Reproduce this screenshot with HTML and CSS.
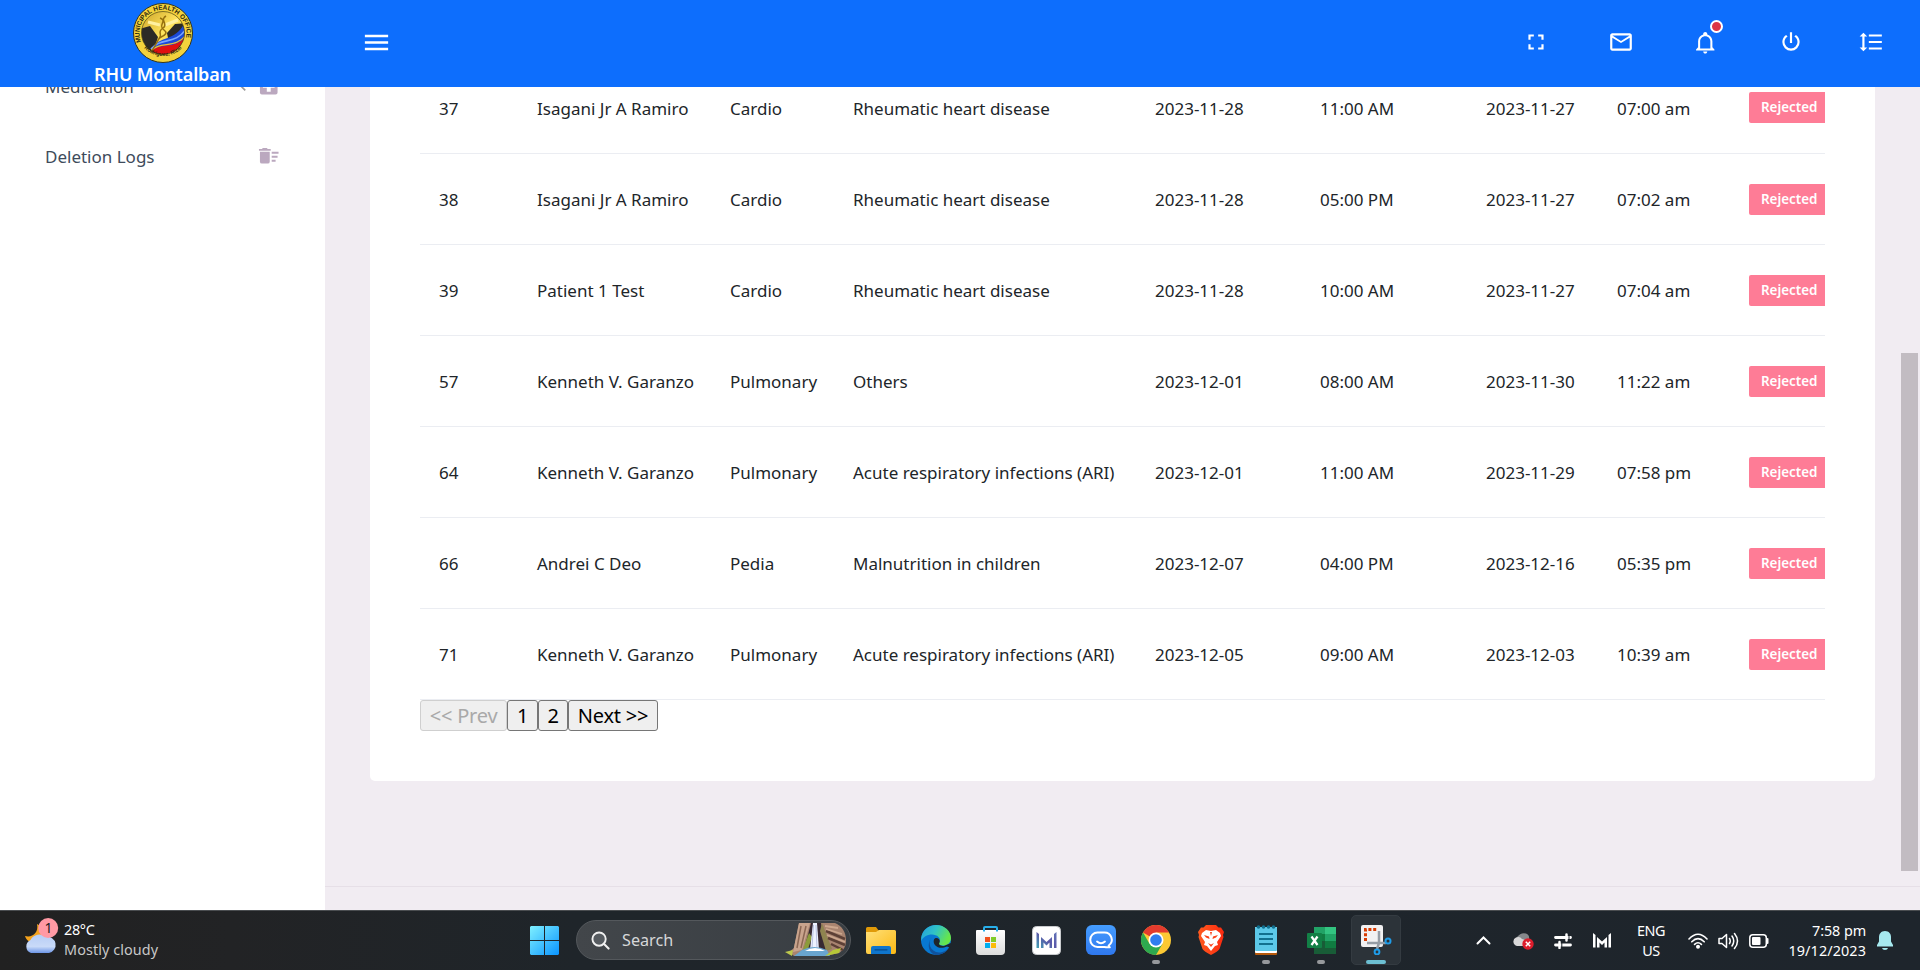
FILE: index.html
```html
<!DOCTYPE html>
<html lang="en">
<head>
<meta charset="utf-8">
<title>RHU Montalban</title>
<link rel="stylesheet" href="styles.css">
</head>
<body>
<header class="navbar">
  <div class="brand">
    <svg class="brand-logo" viewBox="0 0 60 60" width="60" height="60">
      <defs>
        <clipPath id="seal"><circle cx="30" cy="30" r="21.5"/></clipPath>
        <linearGradient id="gold" x1="0" y1="0" x2="1" y2="1"><stop offset="0" stop-color="#b98a12"/><stop offset=".5" stop-color="#ffe45e"/><stop offset="1" stop-color="#d9a51c"/></linearGradient>
        <path id="arcTop" d="M8.2 39 A23.5 23.5 0 1 1 51.8 39"/>
        <path id="arcBottom" d="M8.5 42 A26.5 26.5 0 0 0 51.5 42"/>
      </defs>
      <circle cx="30" cy="30" r="29.5" fill="#f3d23c" stroke="#35351c" stroke-width="1"/>
      <g clip-path="url(#seal)">
        <rect width="60" height="60" fill="url(#gold)"/>
        <path d="M6 26L17 23L25 34L20 50L6 52Z" fill="#2c2a26"/>
        <path d="M34 30L42 21L54 20L54 34L36 40Z" fill="#2c2a26"/>
        <path d="M19 45C27 33 42 38 51 21L55 32L44 48L18 50Z" fill="#1b49d8"/>
        <path d="M18 46C28 34 43 42 53 26" fill="none" stroke="#78a6ff" stroke-width="1.6"/>
        <path d="M17 49C28 38 42 48 54 32L54 60L17 60Z" fill="#e01010"/>
        <path d="M17 48.500C28 37 42 47 54 31" fill="none" stroke="#f0c030" stroke-width="1.2"/>
        <path d="M15 19L27 22M45 17L32 22" stroke="#fff0a0" stroke-width="3"/>
        <path d="M33 13C26 17 36 21 30 25S29 31 27 34L19 48M27 15C35 18 24 22 31 27S24 34 25 38" fill="none" stroke="#96700e" stroke-width="1.5"/>
      </g>
      <circle cx="30" cy="30" r="21.5" fill="none" stroke="#4a4316" stroke-width=".7"/>
      <text class="seal-text"><textPath href="#arcTop" textLength="87" lengthAdjust="spacingAndGlyphs">MUNICIPAL HEALTH OFFICE</textPath></text>
      <text class="seal-text seal-small"><textPath href="#arcBottom" startOffset="4" textLength="42" lengthAdjust="spacingAndGlyphs">Rodriguez, Rizal</textPath></text>
    </svg>
    <span class="brand-name">RHU Montalban</span>
  </div>
  <div class="menu-toggle"><svg viewBox="0 0 24 24" width="31" height="31"><path d="M3,6H21V8H3V6M3,11H21V13H3V11M3,16H21V18H3V16Z"/></svg></div>
  <nav class="nav-icons">
    <div class="nav-item"><svg viewBox="0 0 24 24" width="26" height="26"><path d="M5,5H10V7H7V10H5V5M14,5H19V10H17V7H14V5M17,14H19V19H14V17H17V14M10,17V19H5V14H7V17H10Z"/></svg></div>
    <div class="nav-item"><svg viewBox="0 0 24 24" width="26" height="26"><path d="M22 6C22 4.900 21.100 4 20 4H4C2.900 4 2 4.900 2 6V18C2 19.100 2.900 20 4 20H20C21.100 20 22 19.100 22 18V6M20 6L12 11L4 6H20M20 18H4V8L12 13L20 8V18Z"/></svg></div>
    <div class="nav-item"><svg viewBox="0 0 24 24" width="24.5" height="24.5"><path d="M10 21H14C14 22.100 13.100 23 12 23S10 22.100 10 21M21 19V20H3V19L5 17V11C5 7.900 7 5.200 10 4.300V4C10 2.900 10.900 2 12 2S14 2.900 14 4V4.300C17 5.200 19 7.900 19 11V17L21 19M17 11C17 8.200 14.800 6 12 6S7 8.200 7 11V18H17V11Z"/></svg><span class="alert-dot"></span></div>
    <div class="nav-item"><svg viewBox="0 0 24 24" width="26" height="26"><path d="M16.56,5.44L15.11,6.89C16.84,7.94 18,9.83 18,12A6,6 0 0,1 12,18A6,6 0 0,1 6,12C6,9.83 7.16,7.94 8.88,6.88L7.44,5.44C5.36,6.88 4,9.28 4,12A8,8 0 0,0 12,20A8,8 0 0,0 20,12C20,9.28 18.64,6.88 16.56,5.44M13,3H11V13H13"/></svg></div>
    <div class="nav-item nav-last"><svg viewBox="0 0 24 24" width="26" height="26"><path d="M10,13H22V11H10M10,19H22V17H10M10,7H22V5H10M6,7H8.5L5,3.5L1.5,7H4V17H1.5L5,20.5L8.5,17H6V7Z"/></svg></div>
  </nav>
</header>

<div class="workspace">
  <aside class="sidebar">
    <div class="side-item"><span>Medication</span>
      <svg class="side-arrow" viewBox="0 0 24 24" width="20" height="20"><path d="M15.41,16.58L10.83,12L15.41,7.41L14,6L8,12L14,18L15.41,16.58Z"/></svg>
      <svg class="side-icon" viewBox="0 0 24 24" width="23.5" height="23.5"><path d="M18,14H14V18H10V14H6V10H10V6H14V10H18M19,3H5A2,2 0 0,0 3,5V19A2,2 0 0,0 5,21H19A2,2 0 0,0 21,19V5C21,3.89 20.1,3 19,3Z"/></svg></div>
    <div class="side-item"><span>Deletion Logs</span>
      <svg class="side-icon" viewBox="0 0 24 24" width="23.5" height="23.5"><path d="M15,16H19V18H15V16M15,8H22V10H15V8M15,12H21V14H15V12M3,18A2,2 0 0,0 5,20H11A2,2 0 0,0 13,18V8H3V18M14,5H11L10,4H6L5,5H2V7H14V5Z"/></svg></div>
  </aside>
  <main class="content">
    <section class="card">
      <div class="table-wrap">
        <table class="appointments">
          <colgroup><col class="c-id"><col class="c-name"><col class="c-dept"><col class="c-case"><col class="c-date"><col class="c-time"><col class="c-made"><col class="c-at"><col class="c-status"></colgroup>
          <tbody>
            <tr><td>37</td><td>Isagani Jr A Ramiro</td><td>Cardio</td><td>Rheumatic heart disease</td><td>2023-11-28</td><td>11:00 AM</td><td>2023-11-27</td><td>07:00 am</td><td><span class="badge">Rejected</span></td></tr>
            <tr><td>38</td><td>Isagani Jr A Ramiro</td><td>Cardio</td><td>Rheumatic heart disease</td><td>2023-11-28</td><td>05:00 PM</td><td>2023-11-27</td><td>07:02 am</td><td><span class="badge">Rejected</span></td></tr>
            <tr><td>39</td><td>Patient 1 Test</td><td>Cardio</td><td>Rheumatic heart disease</td><td>2023-11-28</td><td>10:00 AM</td><td>2023-11-27</td><td>07:04 am</td><td><span class="badge">Rejected</span></td></tr>
            <tr><td>57</td><td>Kenneth V. Garanzo</td><td>Pulmonary</td><td>Others</td><td>2023-12-01</td><td>08:00 AM</td><td>2023-11-30</td><td>11:22 am</td><td><span class="badge">Rejected</span></td></tr>
            <tr><td>64</td><td>Kenneth V. Garanzo</td><td>Pulmonary</td><td>Acute respiratory infections (ARI)</td><td>2023-12-01</td><td>11:00 AM</td><td>2023-11-29</td><td>07:58 pm</td><td><span class="badge">Rejected</span></td></tr>
            <tr><td>66</td><td>Andrei C Deo</td><td>Pedia</td><td>Malnutrition in children</td><td>2023-12-07</td><td>04:00 PM</td><td>2023-12-16</td><td>05:35 pm</td><td><span class="badge">Rejected</span></td></tr>
            <tr><td>71</td><td>Kenneth V. Garanzo</td><td>Pulmonary</td><td>Acute respiratory infections (ARI)</td><td>2023-12-05</td><td>09:00 AM</td><td>2023-12-03</td><td>10:39 am</td><td><span class="badge">Rejected</span></td></tr>
          </tbody>
        </table>
      </div>
      <div class="pager"><button class="prev" disabled>&lt;&lt; Prev</button><button class="num">1</button><button class="num num-two">2</button><button class="next">Next &gt;&gt;</button></div>
    </section>
    <footer class="footer"></footer>
    <div class="scroll-thumb"></div>
  </main>
</div>

<div class="taskbar">
  <div class="weather">
    <svg viewBox="0 0 36 38" width="36" height="38">
      <defs><linearGradient id="cloud" x1="0" y1="0" x2="0" y2="1"><stop offset="0" stop-color="#b7cdf5"/><stop offset=".65" stop-color="#c9daf8"/><stop offset="1" stop-color="#6c95e6"/></linearGradient></defs>
      <path d="M13 7C15 16 8 21 1 19C3 27 16 30 20 20C22 14 18 9 13 7Z" fill="#f5a31c"/>
      <path d="M7 36A7 7 0 0 1 6.500 23A10 10 0 0 1 22 20A8 8 0 0 1 25 36Z" fill="url(#cloud)"/>
      <circle cx="24.200" cy="11" r="10" fill="#ff99a4"/>
      <text x="24.400" y="16" class="weather-count">1</text>
    </svg>
    <div class="weather-text"><span class="bright">28°C</span><span>Mostly cloudy</span></div>
  </div>
  <div class="apps">
    <div class="app app-start"><svg viewBox="0 0 29 29" width="29" height="29"><defs><linearGradient id="win" x1="0" y1="0" x2="1" y2="1"><stop offset="0" stop-color="#7ff0ff"/><stop offset="1" stop-color="#0a94ff"/></linearGradient></defs><path fill="url(#win)" d="M1 0H14V14H0V1ZM15 0H28L29 1V14H15ZM0 15H14V29H1L0 28ZM15 15H29V28L28 29H15Z"/></svg></div>
    <div class="search">
      <svg viewBox="0 0 20 20" width="19" height="19"><circle cx="8.500" cy="8.500" r="7" fill="#565b60" stroke="#f0f0f0" stroke-width="2"/><path d="M13.500 13.500L18.500 18.500" stroke="#f0f0f0" stroke-width="2.200" stroke-linecap="round"/></svg>
      <span>Search</span>
      <svg class="search-art" viewBox="0 0 62 34" width="62" height="34">
        <path d="M14 0H50C57 3 61 9 61 17S58 27 54 30L40 33H9L4 29L9 25Z" fill="#a98470"/>
        <path d="M14 0H25L17 27L8 29Z" fill="#c9a48d"/><path d="M16 3L12 25M21 3L16 25" stroke="#8b6754" stroke-width="1.500"/>
        <path d="M26 0H36L41 27H19Z" fill="#372932"/>
        <path d="M37 0L47 26L41 28L35 8Z" fill="#8f8450"/><path d="M24 10L17 29L22 29L27 14Z" fill="#8c9b3b"/>
        <path d="M41 8L60 16M43 15L60 22M46 21L58 27" stroke="#5d4036" stroke-width="2.500"/>
        <path d="M40 3L53 5M41 6L57 11M42 12L60 19" stroke="#cda88f" stroke-width="1.800"/>
        <path d="M28 0H32L34 27H25Z" fill="#eef3ff"/><path d="M28.500 2L27 25M31 2L32 25" stroke="#aab4d8" stroke-width=".8"/>
        <path d="M17 27Q29 21 42 27L45 33H9Z" fill="#69a5cf"/><path d="M20 28Q30 22 40 28Z" fill="#fff"/>
        <path d="M0 29L8 27L7 33Z" fill="#bec94e"/><path d="M40 33L48 27L56 25L54 30Z" fill="#b8c838"/>
      </svg>
    </div>
    <div class="app app-explorer"><svg viewBox="0 0 30 27" width="30" height="27"><defs><linearGradient id="fold" x1="0" y1="0" x2="1" y2="1"><stop offset="0" stop-color="#ffe07a"/><stop offset="1" stop-color="#fcb913"/></linearGradient></defs><path d="M0 1.500Q0 0 1.500 0H10L13 4H28V12H0Z" fill="#e09a08"/><path d="M0 5H10L13 3H28.500Q30 3 30 4.500V25Q30 27 28 27H2Q0 27 0 25Z" fill="url(#fold)"/><path d="M5 27V21Q5 19 7 19H23Q25 19 25 21V27Z" fill="#0f75cc"/><path d="M9 22.800H21" stroke="#064b8b" stroke-width="1.200" stroke-linecap="round"/></svg></div>
    <div class="app"><svg viewBox="0 0 30 30" width="30" height="30"><defs><linearGradient id="edgeA" x1="0" y1="0" x2="1" y2=".4"><stop offset="0" stop-color="#239ddd"/><stop offset=".5" stop-color="#30c2c8"/><stop offset="1" stop-color="#66e64a"/></linearGradient></defs><circle cx="15" cy="15" r="15" fill="#0878d2"/><path d="M.2 13C1 5 8 0 15 0C24 0 30 6.500 30 13C30 18 26 20.500 22 20.500C19 20.500 17 19.500 18 18C21 13 16 9.500 11 9.500C6 9.500 2 12 .2 16Z" fill="url(#edgeA)"/><path d="M11 12C6 17 9 27 18 27.500C23 27.500 26 25 28 22.500C25 28 20 30 15 30C8 29 5 19 11 12Z" fill="#10529c"/><path d="M18.500 17.500C17 20 20 21 23 21L30 18V23L26 21.500C18 25.500 11 20 13 14.500C15 11 20 14 18.500 17.500Z" fill="#1e252c"/></svg></div>
    <div class="app app-store"><svg viewBox="0 0 29 29" width="29" height="29"><defs><linearGradient id="bag" x1="0" y1="0" x2="0" y2="1"><stop offset="0" stop-color="#fff"/><stop offset="1" stop-color="#dcdcdc"/></linearGradient></defs><path d="M8 6V2Q8 1 9 1H20Q21 1 21 2V6" fill="none" stroke="#28afea" stroke-width="2"/><path d="M0 5Q0 4 1 4H28Q29 4 29 5V25Q29 29 25 29H4Q0 29 0 25Z" fill="url(#bag)"/><path d="M8 2V5.500M21 2V5.500" stroke="#28afea" stroke-width="2"/><path fill="#f1511b" d="M9 11H14V16H9Z"/><path fill="#80cc28" d="M15 11H20V16H15Z"/><path fill="#00adef" d="M9 17H14V22H9Z"/><path fill="#fbbc09" d="M15 17H20V22H15Z"/></svg></div>
    <div class="app"><svg viewBox="0 0 29 29" width="29" height="29"><defs><linearGradient id="mm" x1="0" y1="1" x2="1" y2="0"><stop offset="0" stop-color="#40a3b5"/><stop offset=".5" stop-color="#5b58a8"/><stop offset="1" stop-color="#6275b8"/></linearGradient></defs><rect x=".5" y=".5" width="28" height="28" rx="4" fill="#fff" stroke="#c9cbce"/><path fill="url(#mm)" d="M4.500 6L7 8V22H4.500ZM24.500 6L22 8V22H24.500ZM9 11L14.500 16L20 11V22H17.500V16.500L14.500 19.500L11.500 16.500V22H9Z"/></svg></div>
    <div class="app"><svg viewBox="0 0 30 30" width="30" height="30"><defs><linearGradient id="chat" x1="0" y1="0" x2="0" y2="1"><stop offset="0" stop-color="#459dff"/><stop offset="1" stop-color="#2f78ee"/></linearGradient></defs><rect width="30" height="30" rx="6" fill="url(#chat)"/><path d="M11.500 7.500H18.500A7.200 7.200 0 0 1 22.800 20.500L23.500 22.200Q21 22.500 18.500 22H11.500A7.250 7.250 0 0 1 11.500 7.500Z" fill="none" stroke="#fff" stroke-width="2"/><path d="M11 16.500Q15 20 19 16.500" fill="none" stroke="#fff" stroke-width="1.800" stroke-linecap="round"/></svg></div>
    <div class="app"><svg viewBox="0 0 30 30" width="30" height="30"><circle cx="15" cy="15" r="15" fill="#fcc934"/><path d="M15 15L2 7.500A15 15 0 0 1 28 7.500H15Z" fill="#e33b2e"/><path d="M2 7.500A15 15 0 0 0 15 30L21.500 18.750L15 15L8.500 18.750Z" fill="#2da94f"/><circle cx="15" cy="15" r="7.500" fill="#fff"/><circle cx="15" cy="15" r="5.800" fill="#2f7df0"/></svg><span class="mark"></span></div>
    <div class="app"><svg viewBox="0 0 26 30" width="26" height="30"><defs><linearGradient id="brave"><stop offset="0" stop-color="#ff5a1e"/><stop offset="1" stop-color="#fb2a10"/></linearGradient></defs><path d="M8 0H18L20.500 2.500H23L26 7L25 10L25.500 12L21.500 24Q20 26.500 13 30Q6 26.500 4.500 24L.5 12L1 10L0 7L3 2.500H5.500Z" fill="url(#brave)"/><path d="M8 5L13 6L18 5L22 8L23 11L19 17L20 20L17 21L13 26L9 21L6 20L7 17L3 11L4 8Z" fill="#fff"/><path d="M6 10L11 11.500L11.500 14L8 12.500ZM20 10L15 11.500L14.500 14L18 12.500ZM10 18L13 19.500L16 18L13 22ZM12 7H14L13 11Z" fill="#fb4019"/></svg></div>
    <div class="app"><svg viewBox="0 0 22 30" width="22" height="30"><rect y="2" width="22" height="28" rx="1" fill="#b5590b"/><rect y="2" width="22" height="26" rx="1" fill="#fff"/><rect y="2" width="22" height="24" rx="1" fill="#5cc8e8"/><path d="M4 9H18M4 14H18M4 19H18" stroke="#12708f" stroke-width="1.800"/><g fill="#12708f"><circle cx="3.500" cy="2" r="1.800"/><circle cx="8.500" cy="2" r="1.800"/><circle cx="13.500" cy="2" r="1.800"/><circle cx="18.500" cy="2" r="1.800"/></g></svg><span class="mark"></span></div>
    <div class="app"><svg viewBox="0 0 29 27" width="29" height="27"><path d="M7 0H18V9H7Z" fill="#21a366"/><path d="M18 0H29V7H18Z" fill="#33c481"/><path d="M18 7H29V14H18Z" fill="#21a366"/><path d="M7 7H18V14H7Z" fill="#107c41"/><path d="M18 14H29V21H18Z" fill="#107c41"/><path d="M7 14H18V21H29V27H7Z" fill="#185c37"/><rect y="6" width="15" height="15" rx="1" fill="#128046"/><path d="M4.500 9.500L10.500 18M10.500 9.500L4.500 18" stroke="#fff" stroke-width="2.200"/></svg><span class="mark"></span></div>
    <div class="app app-active"><svg viewBox="0 0 32 30" width="32" height="30"><rect x="1" y="0" width="22" height="22" rx="2" fill="#f1f1f2"/><path d="M5.500 16V4.500H17" fill="none" stroke="#d83b01" stroke-width="3" stroke-dasharray="3 1.800"/><path d="M19 6V18L17 24M7 18H26" fill="none" stroke="#969da5" stroke-width="2.500"/><circle cx="28" cy="16" r="2.500" fill="none" stroke="#1f9ce8" stroke-width="2"/><circle cx="17" cy="27" r="2.400" fill="none" stroke="#1f9ce8" stroke-width="2"/></svg><span class="mark mark-active"></span></div>
  </div>
  <div class="tray">
    <div class="cell"><svg viewBox="0 0 15 9" width="15" height="9"><path d="M1.500 7.500L7.500 1.500L13.500 7.500" fill="none" stroke="#fff" stroke-width="2" stroke-linecap="round"/></svg></div>
    <div class="cell"><svg viewBox="0 0 21 18" width="21" height="18"><path d="M5 13A5 5 0 0 1 4 5Q8 0 13 1.500Q17 3 16 8L10 13Z" fill="#85888b"/><path d="M4 14A4.500 4.500 0 0 1 3 5.500Q7 4 9 7L16 9L10 14Z" fill="#d8d8d9"/><circle cx="15" cy="12" r="5.700" fill="#dd1d2c"/><path d="M12.800 9.800L17.200 14.200M17.200 9.800L12.800 14.200" stroke="#fff" stroke-width="1.500"/></svg></div>
    <div class="cell"><svg viewBox="0 0 18 16" width="18" height="16"><path d="M1.500 4.500H16.500M1.500 12H16.500" stroke="#fff" stroke-width="2.800" stroke-linecap="round"/><path d="M12.500 1.500V7.500M5.500 9V15" stroke="#fff" stroke-width="2.500" stroke-linecap="round"/><path d="M15 2V7M7.800 9.500V14.500" stroke="#1e252c" stroke-width="1"/></svg></div>
    <div class="cell cell-m"><svg viewBox="0 0 18 15" width="18" height="15"><path d="M0 0L2.500 2V14.500H0ZM18 0L15.500 2V14.500H18ZM4 4L9 8.500L14 4V14.500H11.500V9.500L9 12L6.500 9.500V14.500H4Z" fill="#fff"/></svg></div>
    <div class="lang"><span>ENG</span><span>US</span></div>
    <div class="status">
      <svg viewBox="0 0 20 16" width="20" height="16" fill="none" stroke="#fff" stroke-width="1.600" stroke-linecap="round"><path d="M1 6Q10 -3.500 19 6M3.800 8.800Q10 2.500 16.200 8.800M6.600 11.400Q10 8 13.400 11.400"/><circle cx="10" cy="13.700" r="1.200" fill="#fff"/></svg>
      <svg viewBox="0 0 21 18" width="21" height="18" fill="none" stroke="#fff" stroke-width="1.500" stroke-linecap="round" stroke-linejoin="round"><path d="M1 6.500H4L8.500 2.500V15.500L4 11.500H1ZM11.500 6.500Q13 9 11.500 11.500M14 4Q17.500 9 14 14M16.500 1.500Q22.500 9 16.500 16.500"/></svg>
      <svg viewBox="0 0 20 14" width="20" height="14"><rect x=".8" y=".8" width="16.500" height="12.400" rx="3" fill="none" stroke="#fff" stroke-width="1.500"/><rect x="3" y="3" width="8.500" height="8" rx="1" fill="#fff"/><path d="M18.500 5V9" stroke="#fff" stroke-width="2" stroke-linecap="round"/></svg>
    </div>
    <div class="clock"><span>7:58 pm</span><span class="date">19/12/2023</span></div>
    <svg class="bell" viewBox="0 0 16 19" width="16" height="19"><path d="M8 0C4 0 2 3 2 6V10.500L0 14V15.500H16V14L14 10.500V6C14 3 12 0 8 0ZM5 17H11Q10.500 19 8 19T5 17Z" fill="#a6e9ef"/></svg>
  </div>
</div>
</body>
</html>
```
FILE: styles.css
```css
* { box-sizing: border-box; }

body {
  margin: 0;
  width: 1920px;
  height: 970px;
  overflow: hidden;
  display: grid;
  grid-template-rows: 87px 823px 60px;
  font-family: "Noto Sans", "Open Sans", sans-serif;
  font-size: 17px;
  color: #212529;
  background: #f1ecf2;
}

svg { display: block; flex: none; }

/* Top bar */
.navbar { display: flex; background: #0d6efd; fill: #fff; color: #fff; }
.brand { width: 325px; display: flex; flex-direction: column; align-items: center; padding-top: 3px; }
.brand-name { font-size: 18px; font-weight: 600; line-height: 22px; letter-spacing: -0.16px; }
.seal-text { font: 700 6.6px "Liberation Sans", sans-serif; fill: #2b2810; }
.seal-small { font-size: 5.4px; }
.menu-toggle { width: 103px; display: flex; align-items: center; justify-content: center; padding-bottom: 2px; }
.nav-icons { display: flex; margin-left: auto; margin-right: 12px; }
.nav-item { width: 85px; display: flex; align-items: center; justify-content: center; position: relative; padding-bottom: 3px; }
.nav-last { width: 75px; }
.alert-dot {
  position: absolute; left: 47px; top: 20px;
  width: 13px; height: 13px; border-radius: 50%;
  background: #dc3545; border: 2px solid #fff;
}

/* Page area */
.workspace { display: flex; overflow: hidden; }
.sidebar { flex: none; width: 325px; background: #fff; color: #3e4b5b; }
.side-item { height: 70px; padding: 0 45px; display: flex; align-items: center; }
.side-item:first-child { margin-top: -36px; }
.side-icon { margin-left: auto; fill: #bba8bf; }
.side-arrow { margin-left: auto; fill: #999; }
.side-arrow + .side-icon { margin-left: 4px; }

.content { position: relative; flex: 1; min-width: 0; padding: 0 45px; }
.card {
  height: 719px; margin-top: -25px; padding: 0 50px;
  background: #fff; border-radius: 5px;
}
.table-wrap { overflow: hidden; }
.appointments { width: 1429px; table-layout: fixed; border-collapse: collapse; }
.appointments td {
  height: 91px; padding: 3px 0 0 19px;
  border-bottom: 1px solid #ebedf2;
  line-height: 24px; vertical-align: middle; white-space: nowrap;
}
.c-id { width: 98px; }
.c-name { width: 193px; }
.c-dept { width: 123px; }
.c-case { width: 302px; }
.c-date { width: 165px; }
.c-time { width: 166px; }
.c-made { width: 131px; }
.c-at { width: 132px; }
.c-status { width: 119px; }
.badge {
  display: block; width: 81px; height: 31px; margin-bottom: 2px; padding-left: 12px;
  background: #fe7c96; border-radius: 2px; color: #fff;
  font-size: 13.4px; font-weight: 600; line-height: 30px;
}

.pager { display: flex; }
.pager button {
  height: 31px; padding: 0; font: 20px/27px "Noto Sans", sans-serif; letter-spacing: -0.2px;
  color: #000; background: #efefef; border: 1px solid #767676; border-radius: 3px;
}
.pager .prev { width: 87px; color: #a9a9a9; border-color: #cfcfcf; }
.pager .num { width: 31px; }
.pager .num-two { width: 30px; }
.pager .next { width: 90px; }

.footer { margin: 105px -45px 0; border-top: 1px solid #e6dfe7; }
.scroll-thumb { position: absolute; right: 2px; top: 266px; width: 17px; height: 518px; background: #c2bcc2; }

/* Taskbar */
.taskbar {
  display: flex; border-top: 1px solid #4a4d50; color: #fff;
  background: linear-gradient(90deg, #212121, #222325 12%, #1f252a 30%, #1e252c);
  font-size: 14.4px; line-height: 20px;
}
.weather { width: 519px; padding: 6px 0 0 24px; display: flex; gap: 4px; }
.weather-text { display: flex; flex-direction: column; padding-top: 3px; color: #c8c8c8; letter-spacing: 0.08px; }
.bright { color: #fff; letter-spacing: -0.3px; }
.weather-count { font: 14px "Noto Sans", sans-serif; text-anchor: middle; fill: #202020; }
.apps { display: flex; align-items: center; gap: 5px; padding-bottom: 1px; }
.app {
  position: relative; width: 50px; height: 50px; border-radius: 5px;
  display: flex; align-items: center; justify-content: center;
}
.app-start { margin-right: 2px; }
.app-store svg { margin-right: 1px; }
.app-active { background: #2c3339; border: 1px solid #343b41; }
.mark { position: absolute; left: 21px; bottom: 1px; width: 8px; height: 4px; border-radius: 2px; background: #96999c; }
.mark-active { left: 14px; bottom: 0; width: 20px; background: #6cbfd2; }
.search {
  width: 275px; height: 40px; padding: 0 3px 0 14px; border-radius: 20px;
  display: flex; align-items: center; gap: 12px;
  background: linear-gradient(90deg, #42464a, #393e43); border: 1px solid #54585c;
  font-size: 16.2px; color: #d6d7d8;
}
.search-art { margin-left: auto; }
.tray { display: flex; align-items: center; margin-left: 62px; }
.cell { width: 40px; display: flex; justify-content: center; }
.cell-m { width: 38px; }
.lang { width: 60px; display: flex; flex-direction: column; align-items: center; letter-spacing: -0.4px; }
.status { display: flex; align-items: center; gap: 10px; padding-left: 7px; }
.clock { width: 97px; display: flex; flex-direction: column; align-items: flex-end; letter-spacing: -0.1px; }
.date { letter-spacing: 0.1px; }
.bell { margin-left: 11px; }
```
